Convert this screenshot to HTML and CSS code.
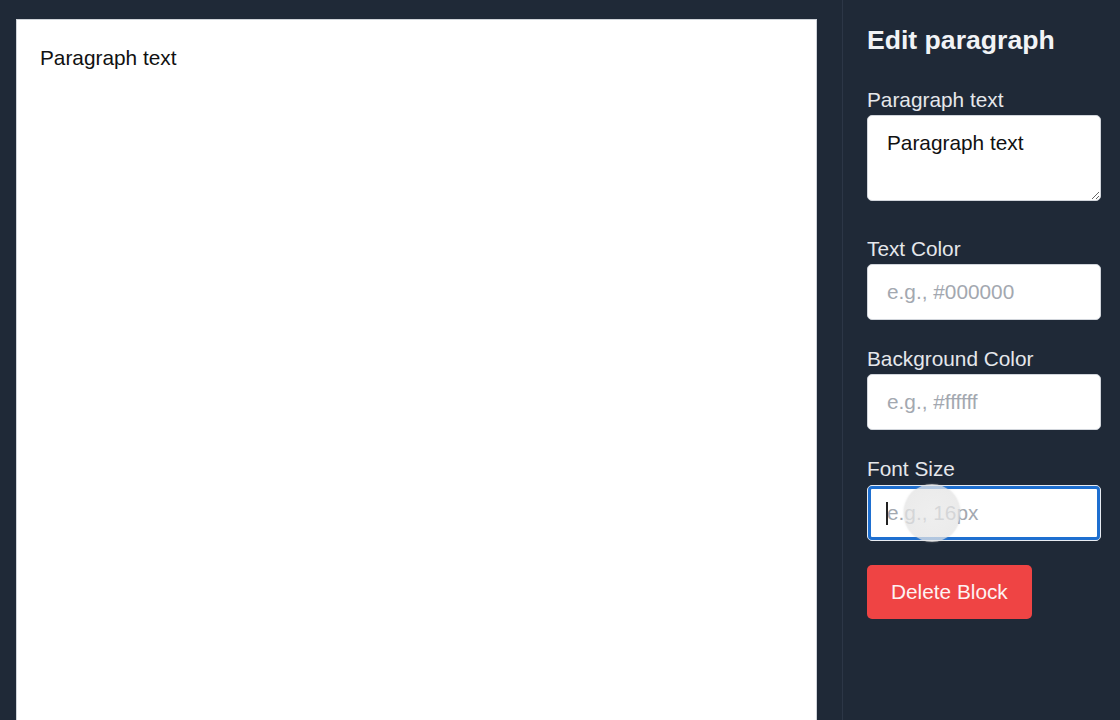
FILE: index.html
```html
<!DOCTYPE html>
<html lang="en">
<head>
<meta charset="utf-8">
<title>Editor</title>
<link rel="stylesheet" href="styles.css">
</head>
<body>
<div class="app">
  <main class="main">
    <div class="canvas">
      <p class="para">Paragraph text</p>
    </div>
  </main>
  <aside class="sidebar">
    <h2 class="title">Edit paragraph</h2>
    <div class="field field-area">
      <label class="label">Paragraph text</label>
      <textarea class="textarea">Paragraph text</textarea>
    </div>
    <div class="field">
      <label class="label">Text Color</label>
      <input class="input" type="text" placeholder="e.g., #000000">
    </div>
    <div class="field">
      <label class="label">Background Color</label>
      <input class="input" type="text" placeholder="e.g., #ffffff">
    </div>
    <div class="field">
      <label class="label">Font Size</label>
      <div class="focus-wrap">
        <input class="input input-focused" type="text" placeholder="e.g., 16px">
        <span class="caret"></span>
        <span class="click-ring"></span>
      </div>
    </div>
    <button class="btn-delete" type="button">Delete Block</button>
  </aside>
</div>
</body>
</html>
```

FILE: styles.css
```css
* { box-sizing: border-box; }
html, body {
  margin: 0;
  padding: 0;
  height: 100%;
  background: #1f2937;
  font-family: "Liberation Sans", Arial, Helvetica, sans-serif;
  overflow: hidden;
}
.app {
  display: flex;
  height: 720px;
  overflow: hidden;
}
.main {
  flex: 1;
  padding: 19px 25px 0 16px;
}
.canvas {
  background: #ffffff;
  border: 1px solid #cfd3d9;
  border-bottom: none;
  height: 760px;
  padding: 23px 23px;
}
.para {
  margin: 0;
  font-size: 20.8px;
  line-height: 30px;
  color: #111111;
}
.sidebar {
  width: 278px;
  flex: none;
  border-left: 1px solid #2c3646;
  padding: 22px 19px 0 24px;
}
.title {
  margin: 0 0 27px;
  font-size: 26.6px;
  line-height: 36px;
  font-weight: bold;
  color: #f1f3f6;
}
.field {
  margin-bottom: 24px;
}
.field-area {
  margin-bottom: 33px;
}
.label {
  display: block;
  font-size: 20.8px;
  line-height: 30px;
  color: #e5e7eb;
}
.textarea {
  display: block;
  width: 100%;
  height: 86px;
  margin: 0;
  padding: 12px 19px;
  border: 1px solid #d1d5db;
  border-radius: 5px;
  background: #ffffff;
  font-family: inherit;
  font-size: 20.8px;
  line-height: 30px;
  color: #111111;
  resize: vertical;
}
.input {
  display: block;
  width: 100%;
  height: 56px;
  margin: 0;
  padding: 0 19px;
  border: 1px solid #d1d5db;
  border-radius: 5px;
  background: #ffffff;
  font-family: inherit;
  font-size: 20.8px;
  color: #111111;
}
.input::placeholder {
  color: #a3a8b0;
}
.focus-wrap {
  position: relative;
  margin-top: 1px;
}
.input-focused {
  border: 1px solid #e8ecf2;
  outline: 3px solid #1e6fd0;
  outline-offset: -4px;
}
.caret {
  position: absolute;
  left: 19px;
  top: 17px;
  width: 2px;
  height: 23px;
  background: #222222;
}
.click-ring {
  position: absolute;
  left: 37px;
  top: -1px;
  width: 56px;
  height: 58px;
  border-radius: 50%;
  background: radial-gradient(circle, rgba(232,232,232,0.72) 0%, rgba(228,228,228,0.75) 75%, rgba(205,205,205,0.8) 100%);
  box-shadow: 0 0 2px rgba(170,170,170,0.5);
  pointer-events: none;
}
.btn-delete {
  display: block;
  height: 54px;
  margin: 0;
  padding: 0 24px;
  border: none;
  border-radius: 5px;
  background: #ef4444;
  color: #fdf2f2;
  font-family: inherit;
  font-size: 20.8px;
}
```
